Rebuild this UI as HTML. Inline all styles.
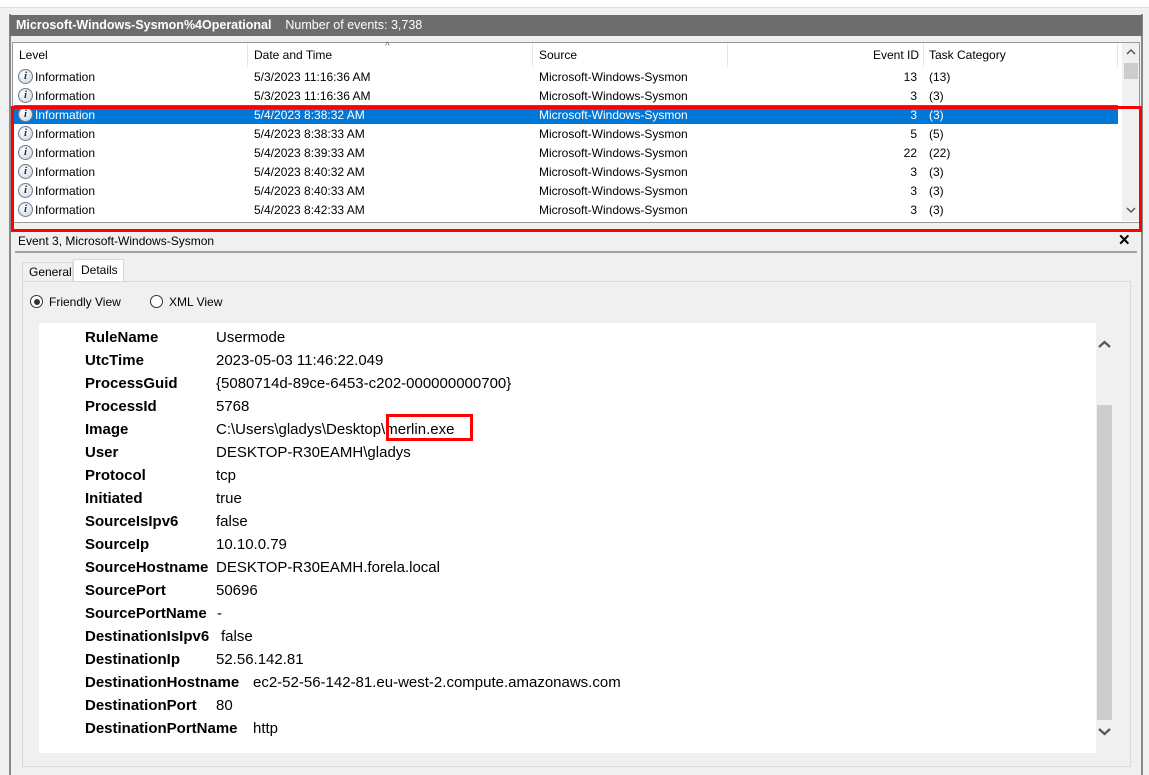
<!DOCTYPE html>
<html><head><style>
*{margin:0;padding:0;box-sizing:border-box}
body{width:1149px;height:775px;overflow:hidden;background:#f0f0f0;font-family:"Liberation Sans",sans-serif;font-size:12px;color:#000;position:relative}
.a{position:absolute}
.row{position:absolute;left:14px;width:1104px;height:19px;line-height:20px}
.row span{position:absolute;white-space:nowrap}
.ic{position:absolute;left:4px;top:2px;width:15px;height:15px;border-radius:50%;border:1px solid #6b7c8f;background:radial-gradient(circle at 40% 35%,#fff,#c8d3de);font:bold 11px "Liberation Serif",serif;color:#234;text-align:center;line-height:13px;font-style:italic}
.sel{background:#0078d7;color:#fff}
.f{position:absolute;left:85px;font-size:15px;font-weight:bold;white-space:nowrap}
.v{position:absolute;font-size:15px;white-space:nowrap}
</style></head><body>
<div class="a" style="left:0;top:0;width:1149px;height:8px;background:#fff;border-bottom:1px solid #ddd"></div>
<div class="a" style="left:9px;top:14px;width:2px;height:761px;background:#888"></div>
<div class="a" style="left:1141px;top:14px;width:2px;height:761px;background:#888"></div>
<div class="a" style="left:10px;top:15px;width:1132px;height:21px;background:#6d6d6d;color:#fff;line-height:21px;padding-left:6px;white-space:nowrap;font-size:12.5px"><b>Microsoft-Windows-Sysmon%4Operational</b>&nbsp;&nbsp;&nbsp;&nbsp;Number of events: 3,738</div>
<div class="a" style="left:12px;top:42px;width:1128px;height:181px;background:#fff;border:1px solid #999"></div>
<div class="a" style="left:13px;top:43px;width:1106px;height:24px;line-height:24px">
<span class="a" style="left:6px">Level</span>
<span class="a" style="left:234px;top:0;height:24px;border-left:1px solid #e5e5e5"></span>
<span class="a" style="left:241px">Date and Time</span>
<span class="a" style="left:372px;top:-8px;font-size:10px;color:#666">^</span>
<span class="a" style="left:519px;top:0;height:24px;border-left:1px solid #e5e5e5"></span>
<span class="a" style="left:526px">Source</span>
<span class="a" style="left:714px;top:0;height:24px;border-left:1px solid #e5e5e5"></span>
<span class="a" style="left:860px">Event ID</span>
<span class="a" style="left:910px;top:0;height:24px;border-left:1px solid #e5e5e5"></span>
<span class="a" style="left:916px">Task Category</span>
<span class="a" style="left:1104px;top:0;height:24px;border-left:1px solid #e5e5e5"></span>
</div>
<div class="a" style="left:1122px;top:43px;width:17px;height:178px;background:#f0f0f0"></div>
<div class="a" style="left:1124px;top:63px;width:14px;height:16px;background:#cdcdcd"></div>
<svg class="a" style="left:1124px;top:47px" width="14" height="10"><path d="M3 7 L7 3 L11 7" stroke="#555" stroke-width="1.5" fill="none"/></svg>
<svg class="a" style="left:1124px;top:205px" width="14" height="10"><path d="M3 3 L7 7 L11 3" stroke="#555" stroke-width="1.5" fill="none"/></svg>
<div class="row" style="top:67px"><div class="ic">i</div><span style="left:21px">Information</span><span style="left:240px">5/3/2023 11:16:36 AM</span><span style="left:525px">Microsoft-Windows-Sysmon</span><span style="right:201px">13</span><span style="left:915px">(13)</span></div>
<div class="row" style="top:86px"><div class="ic">i</div><span style="left:21px">Information</span><span style="left:240px">5/3/2023 11:16:36 AM</span><span style="left:525px">Microsoft-Windows-Sysmon</span><span style="right:201px">3</span><span style="left:915px">(3)</span></div>
<div class="row sel" style="top:105px"><div class="ic">i</div><span style="left:21px">Information</span><span style="left:240px">5/4/2023 8:38:32 AM</span><span style="left:525px">Microsoft-Windows-Sysmon</span><span style="right:201px">3</span><span style="left:915px">(3)</span></div>
<div class="row" style="top:124px"><div class="ic">i</div><span style="left:21px">Information</span><span style="left:240px">5/4/2023 8:38:33 AM</span><span style="left:525px">Microsoft-Windows-Sysmon</span><span style="right:201px">5</span><span style="left:915px">(5)</span></div>
<div class="row" style="top:143px"><div class="ic">i</div><span style="left:21px">Information</span><span style="left:240px">5/4/2023 8:39:33 AM</span><span style="left:525px">Microsoft-Windows-Sysmon</span><span style="right:201px">22</span><span style="left:915px">(22)</span></div>
<div class="row" style="top:162px"><div class="ic">i</div><span style="left:21px">Information</span><span style="left:240px">5/4/2023 8:40:32 AM</span><span style="left:525px">Microsoft-Windows-Sysmon</span><span style="right:201px">3</span><span style="left:915px">(3)</span></div>
<div class="row" style="top:181px"><div class="ic">i</div><span style="left:21px">Information</span><span style="left:240px">5/4/2023 8:40:33 AM</span><span style="left:525px">Microsoft-Windows-Sysmon</span><span style="right:201px">3</span><span style="left:915px">(3)</span></div>
<div class="row" style="top:200px"><div class="ic">i</div><span style="left:21px">Information</span><span style="left:240px">5/4/2023 8:42:33 AM</span><span style="left:525px">Microsoft-Windows-Sysmon</span><span style="right:201px">3</span><span style="left:915px">(3)</span></div>
<div class="a" style="left:11px;top:106px;width:1131px;height:126px;border:3px solid #f00"></div>
<div class="a" style="left:18px;top:234px;white-space:nowrap">Event 3, Microsoft-Windows-Sysmon</div>
<div class="a" style="left:1118px;top:231px;font-weight:bold;font-size:15px">&#10005;</div>
<div class="a" style="left:15px;top:251px;width:1122px;height:2px;background:#a0a0a0"></div>
<div class="a" style="left:22px;top:262px;width:51px;height:20px;border:1px solid #d9d9d9;border-bottom:none;line-height:19px;padding-left:6px">General</div>
<div class="a" style="left:73px;top:259px;width:51px;height:23px;border:1px solid #d9d9d9;border-bottom:none;background:#fff;line-height:20px;padding-left:7px">Details</div>
<div class="a" style="left:22px;top:281px;width:1109px;height:486px;border:1px solid #d9d9d9"></div>
<div class="a" style="left:30px;top:295px;width:13px;height:13px;border:1px solid #333;border-radius:50%;background:#fff"></div>
<div class="a" style="left:33.5px;top:298.5px;width:6px;height:6px;border-radius:50%;background:#333"></div>
<div class="a" style="left:49px;top:295px">Friendly View</div>
<div class="a" style="left:150px;top:295px;width:13px;height:13px;border:1px solid #333;border-radius:50%;background:#fff"></div>
<div class="a" style="left:169px;top:295px">XML View</div>
<div class="a" style="left:39px;top:323px;width:1057px;height:430px;background:#fff"></div>
<div class="a" style="left:1097px;top:405px;width:15px;height:315px;background:#cdcdcd"></div>
<svg class="a" style="left:1097px;top:338px" width="15" height="12"><path d="M2 9 L7.5 4 L13 9" stroke="#555" stroke-width="2.2" fill="none"/></svg>
<svg class="a" style="left:1097px;top:726px" width="15" height="12"><path d="M2 3 L7.5 8 L13 3" stroke="#555" stroke-width="2.2" fill="none"/></svg>
<div class="f" style="top:329px">RuleName</div><div class="v" style="left:216px;top:329px">Usermode</div>
<div class="f" style="top:352px">UtcTime</div><div class="v" style="left:216px;top:352px">2023-05-03 11:46:22.049</div>
<div class="f" style="top:375px">ProcessGuid</div><div class="v" style="left:216px;top:375px">{5080714d-89ce-6453-c202-000000000700}</div>
<div class="f" style="top:398px">ProcessId</div><div class="v" style="left:216px;top:398px">5768</div>
<div class="f" style="top:421px">Image</div><div class="v" style="left:216px;top:421px">C:\Users\gladys\Desktop\merlin.exe</div>
<div class="a" style="left:386px;top:414px;width:87px;height:27px;border:3px solid #f00"></div>
<div class="f" style="top:444px">User</div><div class="v" style="left:216px;top:444px">DESKTOP-R30EAMH\gladys</div>
<div class="f" style="top:467px">Protocol</div><div class="v" style="left:216px;top:467px">tcp</div>
<div class="f" style="top:490px">Initiated</div><div class="v" style="left:216px;top:490px">true</div>
<div class="f" style="top:513px">SourceIsIpv6</div><div class="v" style="left:216px;top:513px">false</div>
<div class="f" style="top:536px">SourceIp</div><div class="v" style="left:216px;top:536px">10.10.0.79</div>
<div class="f" style="top:559px">SourceHostname</div><div class="v" style="left:216px;top:559px">DESKTOP-R30EAMH.forela.local</div>
<div class="f" style="top:582px">SourcePort</div><div class="v" style="left:216px;top:582px">50696</div>
<div class="f" style="top:605px">SourcePortName</div><div class="v" style="left:217px;top:605px">-</div>
<div class="f" style="top:628px">DestinationIsIpv6</div><div class="v" style="left:221px;top:628px">false</div>
<div class="f" style="top:651px">DestinationIp</div><div class="v" style="left:216px;top:651px">52.56.142.81</div>
<div class="f" style="top:674px">DestinationHostname</div><div class="v" style="left:253px;top:674px">ec2-52-56-142-81.eu-west-2.compute.amazonaws.com</div>
<div class="f" style="top:697px">DestinationPort</div><div class="v" style="left:216px;top:697px">80</div>
<div class="f" style="top:720px">DestinationPortName</div><div class="v" style="left:253px;top:720px">http</div>
</body></html>
